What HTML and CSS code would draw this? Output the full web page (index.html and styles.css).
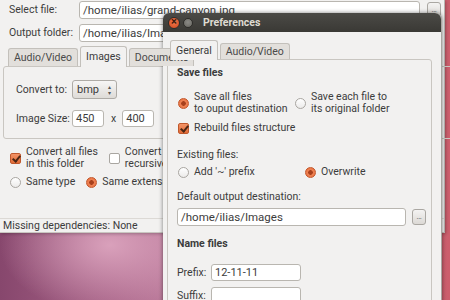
FILE: index.html
```html
<!DOCTYPE html>
<html>
<head>
<meta charset="utf-8">
<link rel="stylesheet" href="styles.css">
</head>
<body>
<div class="desktop">
  <div class="win win-main">
    <div class="form-row">
      <span class="lbl lbl-w">Select file:</span>
      <div class="entry entry-long">/home/ilias/grand-canyon.jpg</div>
      <div class="dots-btn dots-top">...</div>
    </div>
    <div class="form-row">
      <span class="lbl lbl-w">Output folder:</span>
      <div class="entry entry-long">/home/ilias/Images</div>
    </div>
    <div class="tabs tabs-main">
      <div class="tab">Audio/Video</div>
      <div class="tab active">Images</div>
      <div class="tab">Documents</div>
    </div>
    <div class="pane pane-main">
      <div class="p-row">
        <span class="lbl lbl-s">Convert to:</span>
        <div class="combo">bmp<span class="arrows"><i>▴</i><i>▾</i></span></div>
      </div>
      <div class="p-row">
        <span class="lbl lbl-s">Image Size:</span>
        <div class="entry entry-num">450</div>
        <span class="lbl times">x</span>
        <div class="entry entry-num">400</div>
      </div>
    </div>
    <div class="opt-row">
      <div class="opt"><span class="check on"></span><span>Convert all files<br>in this folder</span></div>
      <div class="opt opt-2"><span class="check"></span><span>Convert files<br>recursively</span></div>
    </div>
    <div class="opt-row opt-row2">
      <div class="opt"><span class="radio"></span><span>Same type</span></div>
      <div class="opt opt-3"><span class="radio on"></span><span>Same extension</span></div>
    </div>
    <div class="status">Missing dependencies: None</div>
  </div>

  <div class="win win-pref">
    <div class="titlebar">
      <span class="wbtn close"></span>
      <span class="wbtn mini"></span>
      <span class="title">Preferences</span>
    </div>
    <div class="pref-body">
      <div class="tabs tabs-pref">
        <div class="tab active">General</div>
        <div class="tab">Audio/Video</div>
      </div>
      <div class="pane pane-pref">
        <div class="heading">Save files</div>
        <div class="two-col">
          <div class="opt"><span class="radio on"></span><span>Save all files<br>to ouput destination</span></div>
          <div class="opt"><span class="radio"></span><span>Save each file to<br>its original folder</span></div>
        </div>
        <div class="opt opt-single"><span class="check on"></span><span>Rebuild files structure</span></div>
        <div class="lbl sub">Existing files:</div>
        <div class="two-col two-col-b">
          <div class="opt"><span class="radio"></span><span>Add '~' prefix</span></div>
          <div class="opt"><span class="radio on"></span><span>Overwrite</span></div>
        </div>
        <div class="lbl sub sub2">Default output destination:</div>
        <div class="dest-row">
          <div class="entry entry-dest">/home/ilias/Images</div>
          <div class="dots-btn">...</div>
        </div>
        <div class="heading heading2">Name files</div>
        <div class="name-row">
          <span class="lbl lbl-n">Prefix:</span>
          <div class="entry entry-name">12-11-11</div>
        </div>
        <div class="name-row name-row2">
          <span class="lbl lbl-n">Suffix:</span>
          <div class="entry entry-name"></div>
        </div>
      </div>
    </div>
  </div>
</div>
</body>
</html>
```
FILE: styles.css
```css
* { box-sizing: border-box; }
html, body { margin: 0; padding: 0; }
body {
  width: 450px; height: 300px; overflow: hidden;
  font-family: Roboto, "Noto Sans", sans-serif;
  font-size: 10.5px;
  color: #3c3c3c;
}
.desktop {
  position: relative; width: 450px; height: 300px; overflow: hidden;
  background:
    radial-gradient(ellipse 110px 70px at 110px 245px, rgba(220,164,190,0.95) 0%, rgba(220,164,190,0) 100%),
    linear-gradient(90deg, #87476d 0%, #a86488 25%, #c586a4 45%, #b87394 70%, #c4606f 95%, #cd5e6c 100%);
}
.win { position: absolute; background: #f2f1f0; }
.win-main {
  left: 0; top: 0; width: 445px; height: 233px;
  border-right: 1px solid #b8b5b0; border-bottom: 1px solid #c9c6c1;
  box-shadow: 1px 1px 3px rgba(0,0,0,0.25);
  padding-top: 1px;
  display: flex; flex-direction: column;
}
.lbl { white-space: nowrap; line-height: 12px; }
.form-row { display: flex; align-items: center; height: 18px; padding-left: 9px; }
.form-row + .form-row { margin-top: 5px; }
.lbl-w { width: 70px; }
.entry {
  background: #fff; border: 1px solid #b9b6b0; border-radius: 3px;
  height: 18px; line-height: 16px; padding: 0 3px; white-space: nowrap; overflow: hidden;
  color: #3c3c3c; font-size: 11px;
}
.entry-long { width: 341px; font-size: 11.5px; }
.dots-btn {
  width: 14px; height: 16px; flex: none;
  border: 1px solid #aaa7a2; border-radius: 3px;
  background: linear-gradient(#f4f3f2, #dcd9d5);
  font-size: 8px; line-height: 13px; text-align: center; color: #555; letter-spacing: -0.5px;
}
.dots-top { margin-left: 7px; }
.tabs { display: flex; align-items: flex-end; position: relative; z-index: 1; }
.tabs-main { margin-top: 4px; height: 20px; padding-left: 8px; }
.tab {
  height: 18px; padding: 0 5px; line-height: 17px;
  border: 1px solid #c3c0bb; border-bottom: none; border-radius: 3px 3px 0 0;
  background: #e2dfdb; margin-right: 2px; white-space: nowrap; color: #4a4a4a;
}
.tab.active { height: 21px; background: #f2f1f0; line-height: 20px; position: relative; top: 1px; color: #3c3c3c; }
.pane { border: 1px solid #c9c6c1; border-radius: 3px; }
.pane-main { margin-left: 3px; width: 470px; height: 73px; padding: 13px 0 0 12px; }
.p-row { display: flex; align-items: center; height: 19px; }
.p-row + .p-row { margin-top: 10px; }
.lbl-s { width: 56px; }
.combo {
  width: 45px; height: 19px; padding: 0 0 0 4px; line-height: 17px;
  border: 1px solid #aeaba6; border-radius: 3px;
  background: linear-gradient(#f7f6f5, #dedbd7);
  position: relative; font-size: 11px;
}
.arrows { position: absolute; right: 5px; top: 3px; display: flex; flex-direction: column; font-size: 6px; line-height: 6px; color: #555; }
.arrows i { font-style: normal; }
.entry-num { width: 32px; height: 17px; line-height: 15px; }
.times { margin: 0 6px 0 7px; }
.opt-row { display: flex; margin-top: 7px; padding-left: 10px; }
.opt-row2 { margin-top: 6px; }
.opt { display: flex; align-items: center; gap: 5px; line-height: 12px; white-space: nowrap; }
.opt-2 { margin-left: 11px; }
.opt-3 { margin-left: 11px; }
.check {
  width: 11px; height: 11px; flex: none; border-radius: 2px;
  border: 1px solid #a9a6a1; background: #fff; position: relative;
}
.check.on { background: linear-gradient(#f29366, #e06b37); border-color: #c0582c; }
.check.on::after {
  content: ""; position: absolute; left: 3px; top: 0; width: 3px; height: 6px;
  border: solid #4b2614; border-width: 0 2px 2px 0; transform: rotate(40deg);
}
.radio {
  width: 11px; height: 11px; flex: none; border-radius: 50%;
  border: 1px solid #a9a6a1; background: linear-gradient(#ffffff, #ecebea);
}
.radio.on {
  border-color: #c4562a;
  background: radial-gradient(circle at 50% 50%, #a8401c 0 2px, #ef8152 2.6px, #e5703f 100%);
}
.status {
  margin-top: auto; border-top: 1px solid #dcd9d5; height: 14px; line-height: 13px;
  padding-left: 3px; font-size: 10.5px;
}

.win-pref {
  left: 163px; top: 13px; width: 279px; height: 300px;
  border-radius: 6px 6px 0 0;
  box-shadow: 0 0 4px rgba(0,0,0,0.5);
  border-right: 1px solid #a9a6a1;
}
.titlebar {
  height: 19px; display: flex; align-items: center; padding-left: 5px;
  background: linear-gradient(#4b4a46, #3a3935);
  border-radius: 6px 6px 0 0;
}
.wbtn { border-radius: 50%; flex: none; }
.wbtn.close { width: 12px; height: 12px; background: radial-gradient(circle at 50% 40%, #f27a4e, #d1461c); border: 1px solid #2e2d2a; position: relative; }
.wbtn.close::after { content: "×"; position: absolute; left: 0; right: 0; top: -3px; text-align: center; font-size: 11px; color: #3b1a0d; font-weight: bold; }
.wbtn.mini { width: 10px; height: 10px; margin-left: 3px; background: radial-gradient(circle at 50% 40%, #8b8a86, #66655f); border: 1px solid #2e2d2a; }
.title { margin-left: 10px; color: #dfdbd2; font-weight: bold; font-size: 10.5px; }
.pref-body { padding: 8px 9px 0 4px; }
.tabs-pref { height: 19px; padding-left: 3px; }
.tabs-pref .tab { height: 16px; line-height: 15px; }
.tabs-pref .tab.active { height: 20px; line-height: 19px; }
.pane-pref { height: 260px; padding: 7px 0 0 9px; }
.heading { font-weight: bold; font-size: 10.5px; line-height: 12px; }
.two-col { display: flex; margin-top: 12px; padding-left: 1px; }
.two-col > .opt:first-child { width: 117px; }
.two-col-b { margin-top: 5px; }
.two-col-b > .opt:first-child { width: 127px; }
.opt-single { margin-top: 7px; padding-left: 1px; }
.sub { margin-top: 15px; }
.sub2 { margin-top: 13px; }
.dest-row { display: flex; align-items: center; gap: 6px; margin-top: 5px; }
.entry-dest { width: 229px; font-size: 11.5px; }
.heading2 { margin-top: 12px; }
.name-row { display: flex; align-items: center; margin-top: 14px; }
.name-row2 { margin-top: 6px; }
.lbl-n { width: 34px; }
.entry-name { width: 90px; height: 17px; line-height: 15px; }
```
